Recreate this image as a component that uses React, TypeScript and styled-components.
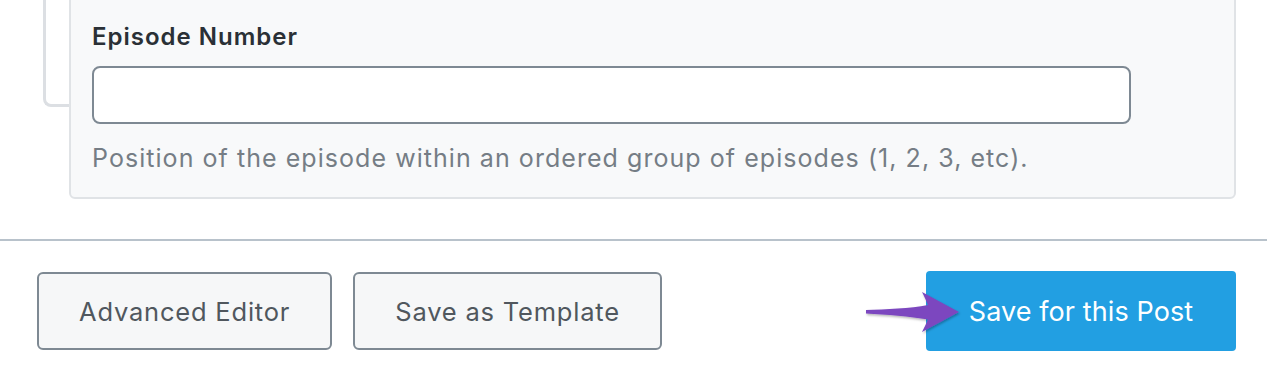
import React from 'react';
import styled, {createGlobalStyle} from 'styled-components';

const GlobalStyle = createGlobalStyle`
    html, body {
        margin: 0;
        padding: 0;
        background: #ffffff;
    }
    body {
        font-family: Inter, "Noto Sans", "Liberation Sans", sans-serif;
        -webkit-font-smoothing: antialiased;
        overflow: hidden;
    }
`

const App = () => {
    return (<Page>
        <GlobalStyle />
        <FieldArea>
            <Connector />
            <FieldCard>
                <FieldLabel htmlFor="episode-number">Episode Number</FieldLabel>
                <FieldInput id="episode-number" type="text" />
                <FieldHelp>Position of the episode within an ordered group of episodes (1, 2, 3, etc).</FieldHelp>
            </FieldCard>
        </FieldArea>

        <Separator />

        <Footer>
            <ButtonGroup>
                <SecondaryButton>Advanced Editor</SecondaryButton>
                <SecondaryButton>Save as Template</SecondaryButton>
            </ButtonGroup>
            <PrimaryWrap>
                <PointerArrow />
                <PrimaryButton>Save for this Post</PrimaryButton>
            </PrimaryWrap>
        </Footer>
    </Page>)
}

// purple annotation arrow pointing at the primary button
const PointerArrow = () => (
    <ArrowSvg width="96" height="44" viewBox="0 0 96 44">
        <defs>
            <filter id="arrow-shadow" x="-10%" y="-20%" width="130%" height="150%">
                <feDropShadow dx="1" dy="1.5" stdDeviation="1.2" floodColor="#000" floodOpacity="0.3" />
            </filter>
        </defs>
        <path
            d="M0 20 C20 19.4 44 18.4 62 15 C60 10 58 6 56 2 L93 22 L56 42 C58 38 60 34 62 29.5 C44 26.4 20 24.4 0 23.4 Z"
            fill="#7b47bf"
            filter="url(#arrow-shadow)"
        />
    </ArrowSvg>
)

const Page = styled.div`
    width: 1267px;
    height: 367px;
    display: flex;
    flex-direction: column;
    overflow: hidden;
`

const FieldArea = styled.div`
    display: flex;
    align-items: flex-start;
    padding: 0 31px 0 43px;
    margin-top: -12px;
`

const Connector = styled.div`
    width: 23px;
    height: 116px;
    border-left: 3px solid #dcdfe3;
    border-bottom: 3px solid #dcdfe3;
    border-bottom-left-radius: 8px;
    flex-shrink: 0;
`

const FieldCard = styled.div`
    flex: 1;
    background: #f8f9fa;
    border: 2px solid #e0e3e6;
    border-radius: 6px;
    padding: 33px 21px 25px 21px;
    display: flex;
    flex-direction: column;
`

const FieldLabel = styled.label`
    font-size: 24px;
    font-weight: 600;
    letter-spacing: 1px;
    color: #2a3036;
    line-height: 28px;
    margin-bottom: 15px;
`

const FieldInput = styled.input`
    width: 1039px;
    height: 58px;
    box-sizing: border-box;
    border: 2px solid #7e8993;
    border-radius: 8px;
    background: #ffffff;
    outline: none;
    font-size: 20px;
    padding: 0 14px;
`

const FieldHelp = styled.div`
    margin-top: 20px;
    font-size: 25px;
    letter-spacing: 1.05px;
    line-height: 28px;
    color: #757d85;
`

const Separator = styled.div`
    margin-top: 40px;
    height: 2px;
    background: #b8c2cb;
`

const Footer = styled.div`
    display: flex;
    align-items: center;
    justify-content: space-between;
    padding: 30px 31px 0 37px;
`

const ButtonGroup = styled.div`
    display: flex;
    gap: 21px;
`

const SecondaryButton = styled.button`
    height: 78px;
    padding: 0 40px;
    box-sizing: border-box;
    background: #f6f7f8;
    border: 2px solid #7e8993;
    border-radius: 6px;
    color: #50575e;
    font-family: inherit;
    font-size: 25.5px;
    letter-spacing: 0.8px;
    cursor: pointer;
`

const PrimaryWrap = styled.div`
    position: relative;
    display: flex;
`

const ArrowSvg = styled.svg`
    position: absolute;
    left: -60px;
    top: 19px;
    z-index: 2;
    overflow: visible;
`

const PrimaryButton = styled.button`
    width: 310px;
    height: 80px;
    background: #229fe2;
    border: none;
    border-radius: 4px;
    color: #ffffff;
    font-family: inherit;
    font-size: 27px;
    letter-spacing: 0.1px;
    cursor: pointer;
`

export default App;
